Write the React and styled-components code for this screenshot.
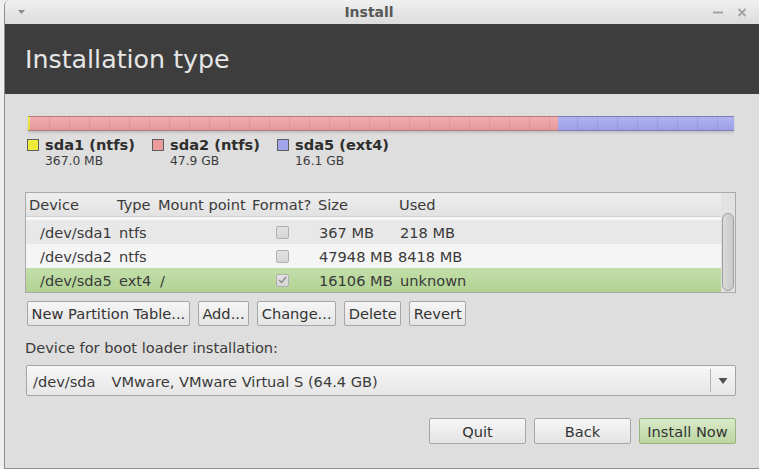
import React from "react";
import styled, { createGlobalStyle } from "styled-components";

const Global = createGlobalStyle`
  html, body { margin: 0; padding: 0; background: #efefef; }
  body { font-family: "DejaVu Sans", "Liberation Sans", sans-serif; overflow: hidden; }
  * { box-sizing: border-box; }
`;

const Window = styled.div`
  margin-left: 4px;
  height: 469px;
  display: flex;
  flex-direction: column;
  background: #dedede;
  border-left: 1px solid #8e8e8e;
  border-bottom: 1px solid #8e8e8e;
  border-top-left-radius: 6px;
  overflow: hidden;
  font-size: 14.6px;
  color: #3a3a3a;
`;

const TitleBar = styled.div`
  height: 24px;
  flex: none;
  display: flex;
  align-items: center;
  padding: 0 12px 0 12px;
  background: linear-gradient(#f0f0f0, #dcdcdc);
`;

const MenuArrow = styled.span`
  width: 8px;
  display: flex;
  justify-content: center;
`;

const Title = styled.div`
  flex: 1;
  text-align: center;
  font-weight: bold;
  font-size: 14px;
  color: #585858;
`;

const Controls = styled.div`
  display: flex;
  align-items: center;
  gap: 14px;
`;

const Header = styled.div`
  height: 70px;
  flex: none;
  display: flex;
  align-items: center;
  padding-left: 20px;
  background: #3d3d3d;
  color: #e6e6e6;
  font-size: 25.3px;
`;

const Body = styled.div`
  flex: 1;
  display: flex;
  flex-direction: column;
  padding: 0 23px 0 20px;
`;

const Bar = styled.div`
  margin: 22px 2px 0 3px;
  height: 15px;
  display: flex;
  box-shadow: 0 2px 2px rgba(0, 0, 0, 0.12);
`;

const Segment = styled.div`
  height: 100%;
  border-top: 1px solid ${(p) => p.$edge};
  border-bottom: 1px solid ${(p) => p.$edge};
  background:
    repeating-linear-gradient(90deg, transparent 0 19px, rgba(0, 0, 0, 0.07) 19px 20px),
    linear-gradient(${(p) => p.$top}, ${(p) => p.$bottom});
`;

const Legend = styled.div`
  margin-top: 6px;
  display: flex;
`;

const LegendItem = styled.div`
  width: 125px;
  display: grid;
  grid-template-columns: 12px auto;
  column-gap: 6px;
  padding-left: 2px;
`;

const Swatch = styled.span`
  width: 12px;
  height: 12px;
  margin-top: 2px;
  border: 1px solid #5e5e5e;
  background: ${(p) => p.$color};
`;

const LegendName = styled.div`
  font-weight: bold;
  line-height: 16px;
  color: #2e2e2e;
`;

const LegendSize = styled.div`
  grid-column: 2;
  font-size: 12.3px;
  line-height: 14px;
  margin-top: 1px;
  color: #3c3c3c;
`;

const Table = styled.div`
  margin-top: 24px;
  display: flex;
  border: 1px solid #a9a9a9;
  background: #f7f7f7;
`;

const List = styled.div`
  flex: 1;
  display: flex;
  flex-direction: column;
`;

const cols = "88px 41px 94px 66px 81px 1fr";

const HeadRow = styled.div`
  height: 24px;
  display: grid;
  grid-template-columns: ${cols};
  align-items: center;
  background: linear-gradient(#eeeeee, #e2e2e2);
  border-bottom: 1px solid #d2d2d2;
  margin-bottom: 3px;
`;

const HeadCell = styled.div`
  padding-left: 3px;
  white-space: nowrap;
`;

const Row = styled.div`
  height: 24px;
  display: grid;
  grid-template-columns: ${cols};
  align-items: center;
  background: ${(p) =>
    p.$selected
      ? "linear-gradient(#c3dfa9, #b2d394)"
      : p.$alt
      ? "#f5f5f5"
      : "#e8e8e8"};
`;

const Cell = styled.div`
  padding-left: ${(p) => p.$pad ?? 4}px;
  white-space: nowrap;
  display: flex;
  justify-content: ${(p) => (p.$center ? "center" : "flex-start")};
`;

const Check = styled.span`
  width: 13px;
  height: 13px;
  border: 1px solid #b0b0b0;
  border-radius: 2px;
  background: linear-gradient(#e2e2e2, #d6d6d6);
  display: flex;
  align-items: center;
  justify-content: center;
`;

const ScrollTrack = styled.div`
  width: 14px;
  display: flex;
  padding: 20px 1px 1px 1px;
  background: #e2e2e2;
`;

const Thumb = styled.div`
  flex: 1;
  border: 1px solid #9e9e9e;
  border-radius: 6px;
  background: linear-gradient(90deg, #dadada, #c9c9c9);
`;

const ButtonRow = styled.div`
  margin-top: 8px;
  padding-left: 2px;
  display: flex;
  gap: 8px;
`;

const Button = styled.button`
  font: inherit;
  color: #333;
  height: ${(p) => (p.$wide ? 26 : 25)}px;
  width: ${(p) => (p.$wide ? "97px" : "auto")};
  padding: 0 ${(p) => (p.$wide ? 0 : 3.6)}px;
  border: 1px solid ${(p) => (p.$primary ? "#98b37e" : "#a6a6a6")};
  border-radius: 2px;
  background: ${(p) =>
    p.$primary
      ? "linear-gradient(#d9eac8, #bcd6a2)"
      : "linear-gradient(#f6f6f6, #e4e4e4)"};
  white-space: nowrap;
`;

const Label = styled.div`
  margin-top: 13px;
  line-height: 18px;
`;

const Combo = styled.div`
  margin: 8px 0 0 1px;
  height: 31px;
  display: flex;
  align-items: center;
  padding-left: 6px;
  border: 1px solid #a4a4a4;
  border-radius: 2px;
  background: linear-gradient(#f7f7f7, #e6e6e6);
`;

const ComboText = styled.span`
  flex: 1;
  white-space: nowrap;
  padding-top: 1px;
`;

const ComboGap = styled.span`
  display: inline-block;
  width: 16px;
`;

const ComboArrow = styled.span`
  width: 25px;
  height: 23px;
  display: flex;
  align-items: center;
  justify-content: center;
  border-left: 1px solid #b4b4b4;
`;

const Footer = styled.div`
  margin-top: 22px;
  display: flex;
  justify-content: flex-end;
  gap: 8px;
`;

const CheckMark = () => (
  <svg width="9" height="8" viewBox="0 0 9 8">
    <path d="M1 4 L3.5 6.5 L8 1" fill="none" stroke="#8a8a8a" strokeWidth="1.4" />
  </svg>
);

const rows = [
  { dev: "/dev/sda1", type: "ntfs", mount: "", fmt: false, size: "367 MB", used: "218 MB" },
  { dev: "/dev/sda2", type: "ntfs", mount: "", fmt: false, size: "47948 MB", used: "8418 MB", usedPad: 2 },
  { dev: "/dev/sda5", type: "ext4", mount: "/", fmt: true, size: "16106 MB", used: "unknown" },
];

export default function App() {
  return (
    <>
      <Global />
      <Window>
        <TitleBar>
          <MenuArrow>
            <svg width="7" height="4" viewBox="0 0 7 4">
              <path d="M0 0 H7 L3.5 4 Z" fill="#8a8a8a" />
            </svg>
          </MenuArrow>
          <Title>Install</Title>
          <Controls>
            <svg width="10" height="3" viewBox="0 0 10 3">
              <rect x="0" y="0.5" width="10" height="2" fill="#a4a4a4" />
            </svg>
            <svg width="10" height="9" viewBox="0 0 10 9">
              <path d="M1.5 1 L8.5 8 M8.5 1 L1.5 8" stroke="#a4a4a4" strokeWidth="2" />
            </svg>
          </Controls>
        </TitleBar>
        <Header>Installation type</Header>
        <Body>
          <Bar>
            <Segment style={{ width: 2 }} $edge="#a8a030" $top="#f4ee60" $bottom="#e0d830" />
            <Segment style={{ width: 528 }} $edge="#b27c7e" $top="#f1adaf" $bottom="#e5979a" />
            <Segment style={{ flex: 1 }} $edge="#7c7eb8" $top="#b1b3f2" $bottom="#9c9fe6" />
          </Bar>
          <Legend>
            <LegendItem>
              <Swatch $color="#eeee3a" />
              <LegendName>sda1 (ntfs)</LegendName>
              <LegendSize>367.0 MB</LegendSize>
            </LegendItem>
            <LegendItem>
              <Swatch $color="#ec9a9c" />
              <LegendName>sda2 (ntfs)</LegendName>
              <LegendSize>47.9 GB</LegendSize>
            </LegendItem>
            <LegendItem>
              <Swatch $color="#a2a4ec" />
              <LegendName>sda5 (ext4)</LegendName>
              <LegendSize>16.1 GB</LegendSize>
            </LegendItem>
          </Legend>
          <Table>
            <List>
              <HeadRow>
                <HeadCell>Device</HeadCell>
                <HeadCell>Type</HeadCell>
                <HeadCell>Mount point</HeadCell>
                <HeadCell>Format?</HeadCell>
                <HeadCell>Size</HeadCell>
                <HeadCell>Used</HeadCell>
              </HeadRow>
              {rows.map((r, i) => (
                <Row key={r.dev} $alt={i === 1} $selected={i === 2}>
                  <Cell $pad={14}>{r.dev}</Cell>
                  <Cell $pad={5}>{r.type}</Cell>
                  <Cell $pad={5}>{r.mount}</Cell>
                  <Cell $pad={0} $center>
                    <Check>{r.fmt && <CheckMark />}</Check>
                  </Cell>
                  <Cell>{r.size}</Cell>
                  <Cell $pad={r.usedPad}>{r.used}</Cell>
                </Row>
              ))}
            </List>
            <ScrollTrack>
              <Thumb />
            </ScrollTrack>
          </Table>
          <ButtonRow>
            <Button>New Partition Table...</Button>
            <Button>Add...</Button>
            <Button>Change...</Button>
            <Button>Delete</Button>
            <Button>Revert</Button>
          </ButtonRow>
          <Label>Device for boot loader installation:</Label>
          <Combo>
            <ComboText>
              /dev/sda<ComboGap />VMware, VMware Virtual S (64.4 GB)
            </ComboText>
            <ComboArrow>
              <svg width="10" height="6" viewBox="0 0 10 6">
                <path d="M0.5 0 H9.5 L5 6 Z" fill="#505050" />
              </svg>
            </ComboArrow>
          </Combo>
          <Footer>
            <Button $wide>Quit</Button>
            <Button $wide>Back</Button>
            <Button $wide $primary>Install Now</Button>
          </Footer>
        </Body>
      </Window>
    </>
  );
}
